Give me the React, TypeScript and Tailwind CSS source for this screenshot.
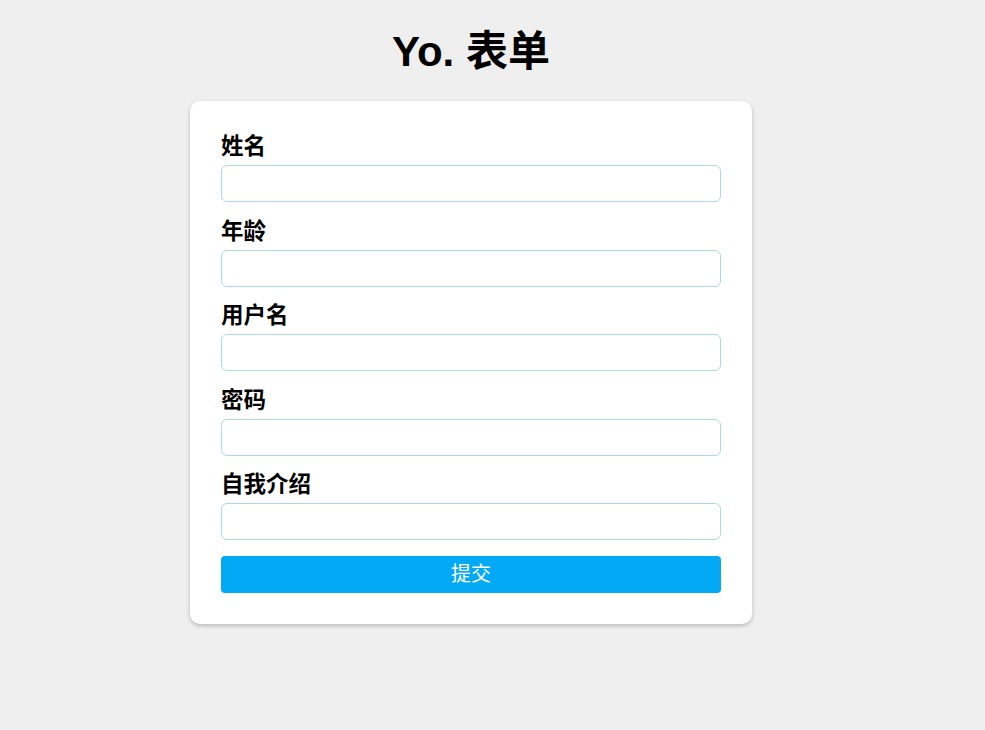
const fields = ["姓名", "年龄", "用户名", "密码", "自我介绍"];

export default function App() {
  return (
    <div
      className="min-h-screen bg-[#efefef] pt-[28px]"
      style={{ fontFamily: '"Liberation Sans", "Noto Sans CJK SC", sans-serif' }}
    >
      <div className="ml-[190px] w-[562px]">
        <h1 className="text-center text-[42px] leading-[48px] font-bold text-black">Yo. 表单</h1>
        <form
          className="mt-[25px] rounded-[10px] bg-white px-[31px] pt-[29px] pb-[31px] shadow-[0_2px_4px_rgba(0,0,0,0.22)]"
          onSubmit={(e) => e.preventDefault()}
        >
          {fields.map((f) => (
            <div key={f} className="mb-[12.5px]">
              <label className="block text-[22.5px] leading-[33px] font-bold text-black">{f}</label>
              <input
                type={f === "密码" ? "password" : "text"}
                className="mt-[2px] block h-[37px] w-full rounded-[6px] border border-[#add8e6] bg-white px-2 outline-none"
              />
            </div>
          ))}
          <button
            type="submit"
            className="mt-[16px] block h-[37px] w-full rounded-[4px] bg-[#03a9f4] text-[20px] leading-[37px] text-white"
          >
            提交
          </button>
        </form>
      </div>
    </div>
  );
}
